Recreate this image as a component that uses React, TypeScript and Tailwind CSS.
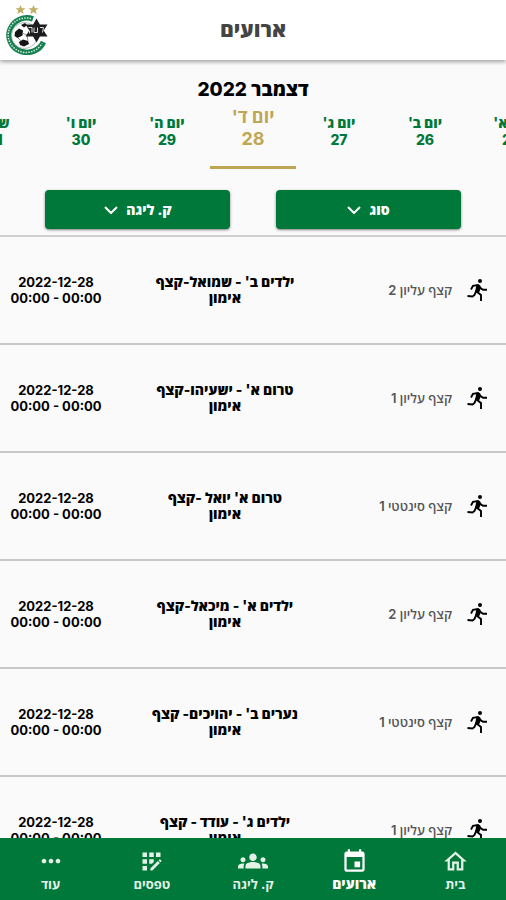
import type { ReactNode } from "react";
import { MdAppRegistration, MdEvent, MdGroups, MdMoreHoriz, MdOutlineHome } from "react-icons/md";

const days = [
  { name: "יום א'", date: "25" },
  { name: "יום ב'", date: "26" },
  { name: "יום ג'", date: "27" },
  { name: "יום ד'", date: "28", active: true },
  { name: "יום ה'", date: "29" },
  { name: "יום ו'", date: "30" },
  { name: "שבת", date: "31" },
];

const events = [
  { place: "קצף עליון 2", title: "ילדים ב' - שמואל-קצף" },
  { place: "קצף עליון 1", title: "טרום א' - ישעיהו-קצף" },
  { place: "קצף סינטטי 1", title: "טרום א' יואל -קצף" },
  { place: "קצף עליון 2", title: "ילדים א' - מיכאל-קצף" },
  { place: "קצף סינטטי 1", title: "נערים ב' - יהויכים- קצף" },
  { place: "קצף עליון 1", title: "ילדים ג' - עודד - קצף" },
];

const tabs: { label: string; icon: ReactNode; active?: boolean }[] = [
  { label: "בית", icon: <MdOutlineHome size={27} /> },
  { label: "ארועים", icon: <MdEvent size={27} />, active: true },
  { label: "ק. ליגה", icon: <MdGroups size={30} /> },
  { label: "טפסים", icon: <MdAppRegistration size={27} /> },
  { label: "עוד", icon: <MdMoreHoriz size={28} /> },
];

function ClubLogo() {
  return (
    <svg viewBox="0 0 44 50" className="h-[50px] w-11" role="img" aria-label="סמל המועדון">
      <g fill="#c2ad62">
        <path d="M16.500 0l1.400 3.300h3.600l-2.800 2.200 1 3.500-3.200-2.100-3.200 2.100 1-3.500-2.800-2.200h3.600z" />
        <path d="M29.500 0l1.400 3.300h3.600l-2.800 2.200 1 3.500-3.200-2.100-3.200 2.100 1-3.500-2.800-2.200h3.600z" />
      </g>
      <path d="M29 13.800A18 17.300 0 1 0 39.500 37" fill="none" stroke="#158050" strokeWidth="5.500" />
      <path
        d="M27 13.500A18 17.300 0 1 0 38 38.500"
        fill="none"
        stroke="#d5e8dc"
        strokeWidth="1.500"
        strokeDasharray="1.500 1.200"
      />
      <circle cx="20.500" cy="30.500" r="13" fill="#fff" stroke="#a6aaa8" strokeWidth="0.800" />
      <path d="M11 27l4-3.500 4 2-.500 5-5 2.500-3-2z" fill="#151515" />
      <path d="M15 37l4-2.500 5 1.500 1 3-5 2.500-4-1.500z" fill="#151515" />
      <path d="M17 20l4-2 2 2-3 2.500z" fill="#151515" />
      <path d="M14 33l3 3M18 28l5 2 1 6" stroke="#777" strokeWidth="0.800" fill="none" />
      <path
        d="M32.500 13.500l3.400 6h7.600l-3.800 6 3.800 6h-7.600l-3.400 6-3.400-6h-7.600l3.800-6-3.800-6h7.600z"
        fill="#1d1d1f"
      />
      <path
        d="M24.500 22.500h3.500v5M30 22.500v5h3.500v-5M36 22.500h3.500l-1 5M25.500 25.500v3"
        fill="none"
        stroke="#dcdcdc"
        strokeWidth="1"
      />
    </svg>
  );
}

function Runner() {
  return (
    <svg viewBox="0 0 24 24" className="h-6 w-6 shrink-0" aria-hidden="true">
      <circle cx="14" cy="3" r="2" fill="#000" />
      <g fill="none" stroke="#000" strokeWidth="1.900">
        <path d="M5 11.500L7 7.800l5-.800 2.500 3 2.500 1.800h4" />
        <path d="M10.500 12.500L8.500 17l-2 1.500-5-.500" />
        <path d="M10.500 13.500l4.500 3.500v6" />
      </g>
      <path d="M10.500 6.500l3.500.500 1 3-2 4.500-4-.500z" fill="#000" />
    </svg>
  );
}

function Filter({ id, label }: { id: string; label: string }) {
  return (
    <div className="flex h-[39px] items-center justify-center gap-2 rounded bg-[#007839] text-white shadow-sm shadow-black/40">
      <select
        id={id}
        aria-label={label}
        className="appearance-none bg-transparent text-[14px] leading-4 font-extrabold outline-none"
      >
        <option>{label}</option>
      </select>
      <svg viewBox="0 0 14 8" className="h-2 w-3.5" aria-hidden="true">
        <path d="M1 1l6 6 6-6" fill="none" stroke="currentColor" strokeWidth="2" />
      </svg>
    </div>
  );
}

export default function App() {
  return (
    <div
      dir="rtl"
      lang="he"
      className="flex h-screen flex-col overflow-hidden bg-[#fafafa] font-['Inter','Open_Sans','DejaVu_Sans',sans-serif] text-black"
    >
      <header className="relative z-10 grid h-[60px] shrink-0 grid-cols-[1fr_auto_1fr] items-center bg-white px-1 shadow-[0_2px_4px_rgba(0,0,0,0.35)]">
        <h1 className="col-start-2 text-[21px] leading-6 font-extrabold text-[#444]">ארועים</h1>
        <div className="justify-self-end">
          <ClubLogo />
        </div>
      </header>

      <section className="shrink-0 overflow-hidden border-b-2 border-[#d0d0d0] pt-[18px] pb-1.5">
        <h2 className="text-center text-[19px] leading-6 font-extrabold">דצמבר 2022</h2>
        <div className="flex h-[67px] justify-center">
          {days.map((day) => (
            <button
              key={day.date}
              type="button"
              aria-pressed={!!day.active}
              className={
                day.active
                  ? "flex w-[17%] shrink-0 flex-col items-center border-b-3 border-[#bfa654] pt-1 text-[18px] leading-[22px] font-bold text-[#bfa654]"
                  : "flex w-[17%] shrink-0 flex-col items-center pt-3 text-[14px] leading-[17px] font-extrabold text-[#007839]"
              }
            >
              <span>{day.name}</span>
              <span>{day.date}</span>
            </button>
          ))}
        </div>
        <div className="mt-[21px] flex justify-evenly *:w-[185px]">
          <Filter id="type" label="סוג" />
          <Filter id="league" label="ק. ליגה" />
        </div>
      </section>

      <main className="min-h-0 flex-1 overflow-y-auto [scrollbar-width:none]">
        <ul>
          {events.map((event) => (
            <li
              key={event.title}
              className="grid h-[108px] grid-cols-[168fr_226fr_112fr] items-center border-b-2 border-[#c8c8c8] text-[14px] leading-4 font-extrabold"
            >
              <div className="flex items-center gap-3.5 ps-4 text-[13px] font-semibold text-[#555]">
                <Runner />
                <span>{event.place}</span>
              </div>
              <div className="text-center">
                <p>{event.title}</p>
                <p>אימון</p>
              </div>
              <div dir="ltr" className="text-center text-[13px] font-bold">
                <p>2022-12-28</p>
                <p>00:00 - 00:00</p>
              </div>
            </li>
          ))}
        </ul>
      </main>

      <nav className="grid h-[62px] shrink-0 grid-cols-5 bg-[#007839] text-white">
        {tabs.map((tab) => (
          <a
            key={tab.label}
            href="#"
            aria-current={tab.active ? "page" : undefined}
            className={
              tab.active
                ? "flex flex-col items-center pt-2 text-[14px] leading-4 font-extrabold"
                : "flex flex-col items-center pt-2 text-[13px] leading-4 font-bold text-[#e4f1e9]"
            }
          >
            <span className="flex h-[30px] items-center">{tab.icon}</span>
            <span>{tab.label}</span>
          </a>
        ))}
      </nav>
    </div>
  );
}
